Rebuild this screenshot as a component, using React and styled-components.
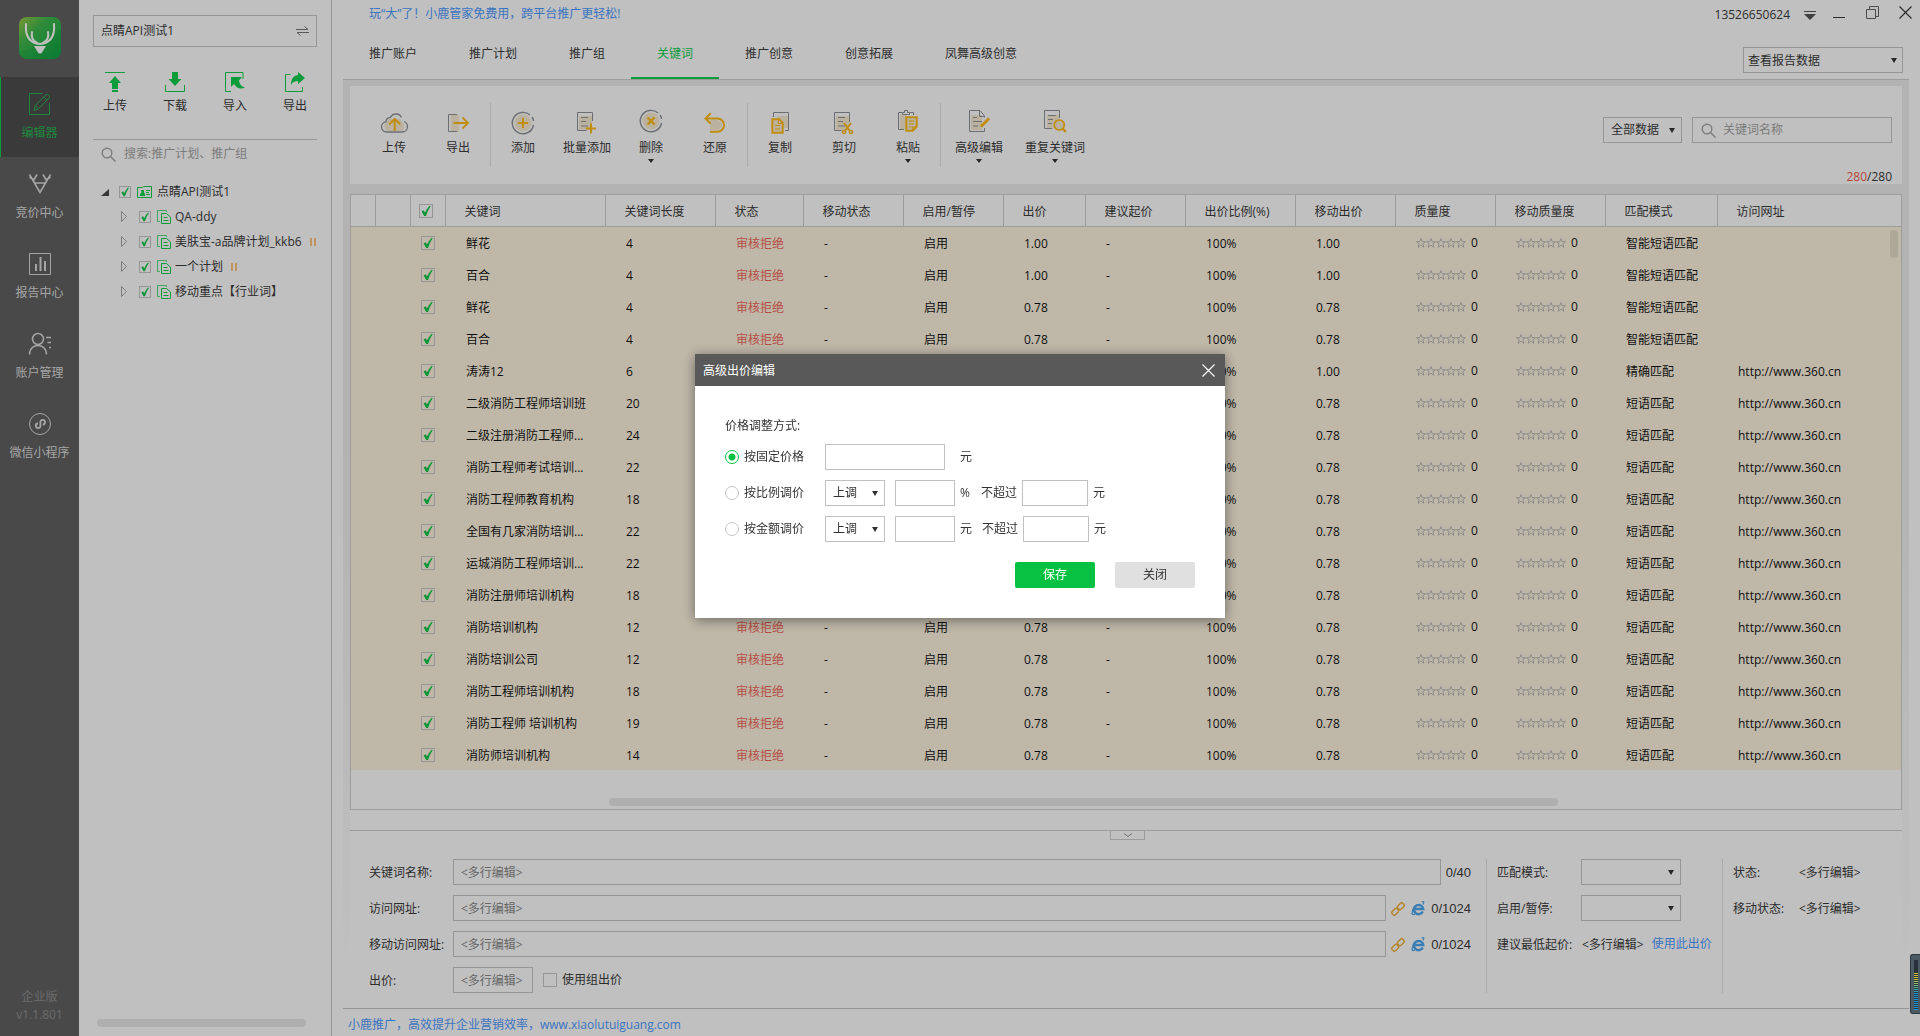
import React, { useState } from 'react'
import styled, { createGlobalStyle, css } from 'styled-components'

const TICK = "url(\"data:image/svg+xml,%3Csvg xmlns='http://www.w3.org/2000/svg' viewBox='0 0 12 12'%3E%3Cpath d='M1.600 6.400 L3.600 5.200 L5 7.600 Q6.800 3.600 9.400 1 L10.800 1 Q7.800 5.400 6 11 L4.200 11 Z' fill='%230bc94a'/%3E%3C/svg%3E\")"

const GlobalStyle = createGlobalStyle`
  * { box-sizing: border-box; }
  body {
    margin: 0;
    background: #fff;
    color: #3c3c3c;
    font: 12px/16px "Open Sans", "Noto Sans CJK SC", sans-serif;
  }
  button, input, select {
    font: inherit;
    color: inherit;
    margin: 0;
    border-radius: 0;
  }
  button {
    border: 0;
    padding: 0;
    background: none;
    cursor: pointer;
  }
  a { text-decoration: none; }
  ul { list-style: none; margin: 0; padding: 0; }
`;

const Page = styled.div`
  display: flex;
  min-height: 100vh;
`;

/* left rail */

const Rail = styled.nav`
  display: flex;
  flex-direction: column;
  flex: none;
  width: 79px;
  background: #626262;
`;

const LogoBox = styled.div`
  display: flex;
  justify-content: center;
  height: 77px;
  padding-top: 17px;
`;

const RailItem = styled.button`
  display: flex;
  flex-direction: column;
  align-items: center;
  gap: 9px;
  width: 100%;
  height: 80px;
  padding-top: 15px;
  color: #dcdcdc;
  ${p => p.$active && css`
    background: #4d4d4d;
    color: #29b453;
    box-shadow: inset 1px 0 #10cf50;
  `}
`;

const Version = styled.div`
  margin-top: auto;
  padding-bottom: 12px;
  line-height: 18px;
  text-align: center;
  color: #8f8f8f;
`;

/* account tree */

const TreePanel = styled.aside`
  display: flex;
  flex-direction: column;
  flex: none;
  width: 253px;
  padding: 15px 14px 9px;
  border-right: 1px solid #c7c7c7;
`;

const AccountBox = styled.button`
  display: flex;
  align-items: center;
  justify-content: space-between;
  height: 32px;
  padding: 0 7px;
  border: 1px solid #c7c7c7;
`;

const SyncButtons = styled.div`
  display: flex;
  margin: 25px -8px;
`;

const SyncButton = styled.button`
  display: flex;
  flex: 1;
  flex-direction: column;
  align-items: center;
  gap: 6px;
`;

const TreeSearch = styled.label`
  display: flex;
  align-items: center;
  gap: 8px;
  height: 29px;
  padding-left: 8px;
  border-top: 1px solid #c7c7c7;
`;

const BareInput = styled.input`
  flex: 1;
  min-width: 0;
  border: 0;
  padding: 0;
  background: none;
  outline: 0;
  &::placeholder { color: #a6a6a6; opacity: 1; }
`;

const Tree = styled.ul`
  margin-top: 11px;
  overflow: hidden;
`;

const TreeRow = styled.li`
  display: flex;
  align-items: center;
  height: 25px;
  padding-left: ${p => (p.$root ? 8 : 28)}px;
  white-space: nowrap;
  svg { flex: none; }
  label { margin-left: ${p => (p.$root ? 5 : 4)}px; }
`;

const TreeArrow = styled.button`
  display: flex;
  flex: none;
  width: 18px;
`;

const Pause = styled.i`
  flex: none;
  width: 6px;
  height: 8px;
  margin-left: 8px;
  border: solid #ffc67c;
  border-width: 0 2px;
`;

const ScrollThumb = styled.div`
  height: 8px;
  border-radius: 4px;
  background: #e9e9e9;
`;

const TreeScroll = styled(ScrollThumb)`
  width: 209px;
  margin: auto 0 0 4px;
`;

const Check = styled.input.attrs({ type: 'checkbox' })`
  appearance: none;
  flex: none;
  width: ${p => p.$size || 14}px;
  height: ${p => p.$size || 14}px;
  border: 1px solid #c7c7c7;
  vertical-align: middle;
  &:checked { background: ${TICK} center / ${p => (p.$size ? 10 : 12)}px no-repeat; }
`;

/* main area */

const Main = styled.main`
  display: flex;
  flex-direction: column;
  flex: 1;
  min-width: 0;
  padding: 0 11px 0 10px;
`;

const TitleBar = styled.header`
  display: flex;
  align-items: center;
  justify-content: space-between;
  height: 28px;
  padding-left: 27px;
`;

const Link = styled.a`
  color: #4f9bff;
`;

const WindowTools = styled.div`
  display: flex;
  align-items: center;
  gap: 14px;
  margin-right: -3px;
  padding-top: 2px;
  button { display: flex; }
`;

const WindowButtons = styled.div`
  display: flex;
  gap: 20px;
  margin-left: 3px;
  padding-bottom: 6px;
`;

const TabBar = styled.div`
  display: flex;
  align-items: flex-end;
  justify-content: space-between;
  height: 52px;
  margin-left: 1px;
  padding-right: 6px;
  border-bottom: 1px solid #cfcfcf;
`;

const Tabs = styled.div`
  display: flex;
`;

const Tab = styled.button`
  height: 51px;
  padding: 2px 26px 0;
  border-bottom: 2px solid transparent;
  ${p => p.$active && css`
    color: #10cf50;
    border-color: #10cf50;
  `}
`;

const SelectBox = styled.span`
  position: relative;
  display: inline-flex;
  width: ${p => p.$width}px;
  select {
    appearance: none;
    width: 100%;
    height: 26px;
    padding: 0 7px;
    border: 1px solid ${p => p.$line || '#c7c7c7'};
    background: transparent;
  }
  &::after {
    content: "";
    position: absolute;
    right: 7px;
    top: 11px;
    border: 3px solid transparent;
    border-top: 5px solid #333;
    border-bottom: 0;
    pointer-events: none;
  }
`;

const ReportSelect = styled(SelectBox)`
  margin-bottom: 6px;
  select { padding: 2px 4px 0; }
  &::after { right: 6px; }
`;

const Frame = styled.div`
  display: flex;
  flex: 1;
  flex-direction: column;
  margin-left: 1px;
  padding: 6px 7px 0;
  background: linear-gradient(#eee, #eee 40%, #fff 96%);
`;

const Toolbar = styled.section`
  padding: 17px 10px 0 12px;
  background: #fff;
`;

const ToolbarRow = styled.div`
  display: flex;
  height: 64px;
`;

const ToolGroup = styled.div`
  display: flex;
  & + & { border-left: 1px solid #e4e4e4; }
`;

const ToolButton = styled.button`
  display: flex;
  flex-direction: column;
  align-items: center;
  width: ${p => (p.$wide ? 76 : 64)}px;
  padding-top: 8px;
  svg { margin-bottom: 5px; }
  &::after {
    content: "";
    margin-top: 3px;
    border: 3px solid transparent;
    border-top: 4px solid ${p => (p.$menu ? '#333' : 'transparent')};
    border-bottom: 0;
  }
`;

const Filters = styled.div`
  display: flex;
  gap: 10px;
  height: 26px;
  margin: 14px 0 0 auto;
`;

const SearchBox = styled.label`
  display: flex;
  align-items: center;
  gap: 7px;
  width: 200px;
  padding: 0 8px;
  border: 1px solid #c7c7c7;
`;

const Count = styled.div`
  padding-top: 2px;
  line-height: 15px;
  text-align: right;
  b { font-weight: normal; color: #f2604f; }
`;

const Grid = styled.section`
  position: relative;
  display: flex;
  flex: 1;
  flex-direction: column;
  margin-top: 10px;
  border: 1px solid #d2d2d2;
  background: #fff;
`;

const Table = styled.table`
  width: 100%;
  table-layout: fixed;
  border-collapse: collapse;
  th, td {
    padding: 3px 0 0 21px;
    text-align: left;
    font-weight: normal;
    white-space: nowrap;
    overflow: hidden;
  }
  th {
    height: 31px;
    padding-left: 19px;
    border-right: 1px solid #cfcfcf;
    border-bottom: 1px solid #cfcfcf;
  }
  th:last-child { border-right: 0; }
  td {
    height: 32px;
    color: #151515;
    background: #fef4e0;
  }
  th:nth-child(3) { padding: 0 0 0 8px; }
  td:nth-child(3) { padding: 0 0 0 11px; }
`;

const Rejected = styled.span`
  color: #f2685c;
`;

const Stars = styled.span`
  display: flex;
  align-items: center;
  gap: 5px;
  padding-bottom: 2px;
`;

const RowScroll = styled.div`
  position: absolute;
  right: 3px;
  top: 35px;
  width: 8px;
  height: 28px;
  border-radius: 4px;
  background: #e6deca;
`;

const GridScroll = styled(ScrollThumb)`
  margin: auto 343px 3px 258px;
`;

/* batch edit form */

const Editor = styled.section`
  background: #fff;
  padding-top: 20px;
`;

const EditorInner = styled.div`
  position: relative;
  display: flex;
  padding: 28px 0 15px;
  border-top: 1px solid #cfcfcf;
`;

const Collapse = styled.button`
  position: absolute;
  left: 49%;
  top: -1px;
  display: flex;
  justify-content: center;
  width: 35px;
  height: 10px;
  border: 1px solid #cfcfcf;
  background: #fff;
`;

const Fields = styled.div`
  display: flex;
  flex-direction: column;
  gap: 10px;
  min-width: 0;
  ${p => (p.$width ? css`
    width: ${p.$width}px;
    padding-left: 10px;
    border-left: 1px solid #e4e4e4;
  ` : css`
    flex: 1;
    padding: 0 15px 0 19px;
  `)}
`;

const Field = styled.div`
  display: flex;
  align-items: center;
  height: 26px;
  white-space: nowrap;
`;

const FieldLabel = styled.label`
  flex: none;
  width: ${p => p.$width}px;
  padding-top: 2px;
`;

const FieldText = styled.span`
  flex: none;
  padding-top: 2px;
  margin-right: 8px;
`;

const TextInput = styled.input`
  height: 26px;
  min-width: 0;
  padding: 0 7px;
  border: 1px solid ${p => p.$line || '#c7c7c7'};
  background: #fff;
  ${p => (p.$width ? `width: ${p.$width}px;` : 'flex: 1;')}
  &::placeholder { color: #8a8a8a; opacity: 1; }
`;

const Tail = styled.span`
  display: flex;
  align-items: center;
  gap: 6px;
  margin-left: 5px;
  padding-top: 1px;
  font: 13px/16px "Liberation Sans", sans-serif;
  button { display: flex; }
`;

const GroupBid = styled.label`
  display: flex;
  align-items: center;
  gap: 5px;
  margin-left: 10px;
`;

const Footer = styled.footer`
  height: 28px;
  margin-left: 1px;
  padding: 8px 5px 0;
  border-top: 1px solid #c7c7c7;
`;

/* dialog */

const Shade = styled.div`
  position: fixed;
  inset: 0;
  display: flex;
  align-items: center;
  justify-content: center;
  padding-bottom: 64px;
  background: rgba(0, 0, 0, .247);
`;

const Dialog = styled.div`
  width: 530px;
  background: #fff;
  color: #333;
  box-shadow: 0 2px 12px rgba(0, 0, 0, .45);
`;

const DialogHead = styled.div`
  display: flex;
  align-items: center;
  justify-content: space-between;
  height: 32px;
  padding: 2px 10px 0 8px;
  background: #595959;
  color: #fff;
  button { display: flex; padding-bottom: 2px; }
`;

const DialogForm = styled.form`
  padding: 32px 30px 30px;
`;

const DialogRow = styled.div`
  display: flex;
  align-items: center;
  height: 26px;
  margin-top: 10px;
`;

const RadioLabel = styled.label`
  display: flex;
  align-items: center;
  gap: 5px;
  width: 100px;
`;

const Radio = styled.input.attrs({ type: 'radio' })`
  appearance: none;
  width: 14px;
  height: 14px;
  border: 1px solid #c4c4c4;
  border-radius: 50%;
  &:checked {
    border-color: #07c242;
    background: radial-gradient(#07c242 3px, transparent 4px);
  }
`;

const AmountInput = styled(TextInput)`
  margin-left: 10px;
`;

const Unit = styled.span`
  min-width: 11px;
  margin-left: ${p => p.$gap || 5}px;
`;

const Limit = styled.label`
  display: flex;
  align-items: center;
  gap: 5px;
  margin-left: 10px;
`;

const Actions = styled.div`
  display: flex;
  justify-content: flex-end;
  gap: 20px;
  margin-top: 20px;
`;

const ActionButton = styled.button`
  width: 80px;
  height: 26px;
  border-radius: 2px;
  background: ${p => (p.$primary ? '#07c242' : '#e0e0e0')};
  color: ${p => (p.$primary ? '#fff' : '#333')};
`;

const SpeedMeter = styled.div`
  position: fixed;
  right: 0;
  bottom: 22px;
  width: 10px;
  height: 60px;
  padding: 5px 2px 4px 3px;
  border: 1px solid #2f3940;
  border-right: 0;
  border-radius: 3px 0 0 3px;
  background: #4c5a64;
  &::after {
    content: "";
    display: block;
    width: 4px;
    height: 50px;
    background:
      repeating-linear-gradient(#28323a 0 1px, transparent 1px 2px),
      linear-gradient(#28323a 12px, #d8b92c 12px, #c8c83c 20px, #49b7a0 28px, #1d9be0 34px);
  }
`;

const GRAY = '#8f9399'
const GOLD = '#ffbc14'
const TINT = '#f8ecd2'

const Svg = ({ w = 24, h = 24, children, ...rest }) => (
  <svg width={w} height={h} viewBox={`0 0 ${w} ${h}`} fill="none" stroke="currentColor" overflow="visible" aria-hidden="true" {...rest}>
    {children}
  </svg>
)

const ToolIcon = ({ children }) => <Svg w={28} stroke={GRAY}>{children}</Svg>

const Lines = () => <path d="M8 6.500h7M8 10.500h5M8 15h7" />

const toolIcons = {
  upload: (
    <ToolIcon>
      <path d="M8 8h12l4 6-1 6H7l-3-4z" fill={TINT} stroke="none" />
      <path d="M24 10.500c2.300.9 3.500 2.700 3.500 5 0 3.500-2.500 5.500-5.500 5.500H7c-3.500 0-5.500-2.300-5.500-5s2-4.900 4.500-5.200C6 8 8 6.400 10.200 6.700 11.500 4.200 13.500 3 16 3c2.700 0 4.600 1.300 5.500 3.500" strokeWidth="1.300" />
      <path d="M14.700 20V8M9.300 13.300l5.400-5.400 5.400 5.400" stroke={GOLD} strokeWidth="2" />
    </ToolIcon>
  ),
  exportOut: (
    <ToolIcon>
      <path d="M7 4h8v17H7z" fill={TINT} stroke="none" />
      <path d="M13 3.500H4.500v17H13" />
      <path d="M9.500 12h14M18.500 6.500l5.500 5.500-5.500 5.500" stroke={GOLD} strokeWidth="1.800" />
    </ToolIcon>
  ),
  add: (
    <ToolIcon>
      <circle cx="14" cy="12" r="8.500" fill={TINT} stroke="none" />
      <path d="M24.500 14A10.700 10.700 0 1 1 21 4M23 6a10 10 0 0 1 1.600 4" strokeWidth="1.400" />
      <path d="M14 7v10M9 12h10" stroke={GOLD} strokeWidth="2" />
    </ToolIcon>
  ),
  batch: (
    <ToolIcon>
      <path d="M6 5h13v14H6z" fill={TINT} stroke="none" />
      <path d="M19.500 10V1.500h-15v18h9" />
      <Lines />
      <path d="M18 12.500v10M13 17.500h10" stroke={GOLD} strokeWidth="2" />
    </ToolIcon>
  ),
  remove: (
    <ToolIcon>
      <circle cx="14" cy="10" r="8.500" fill={TINT} stroke="none" />
      <path d="M24.500 12A10.700 10.700 0 1 1 21 2M23 4a10 10 0 0 1 1.600 4" strokeWidth="1.400" />
      <path d="M10.500 6.500l7 7M17.500 6.500l-7 7" stroke={GOLD} strokeWidth="2.400" />
    </ToolIcon>
  ),
  restore: (
    <ToolIcon>
      <path d="M9 9h8l4 3v4l-4 3H9z" fill={TINT} stroke="none" />
      <path d="M9.700 2.300L4.500 7.500l5.200 5.200M5 7.500h11.500a6.400 6.400 0 0 1 0 13.200H9" stroke={GOLD} strokeWidth="2" />
    </ToolIcon>
  ),
  copy: (
    <ToolIcon>
      <path d="M11 5h11v12H11z" fill={TINT} stroke="none" />
      <path d="M7.500 6V1.500h15v18H19" />
      <path d="M6.300 8.300h7l3.400 3.500v10H6.300z" fill={TINT} stroke={GOLD} strokeWidth="2" />
      <path d="M9 14.500h5M9 18h5M12.500 9v3.500h4" stroke={GOLD} />
    </ToolIcon>
  ),
  cut: (
    <ToolIcon>
      <path d="M6 5h13v14H6z" fill={TINT} stroke="none" />
      <path d="M19.500 11V1.500h-15v18h7" />
      <Lines />
      <path d="M14 12l6 8M21 12l-6 8" stroke={GOLD} strokeWidth="2" />
      <circle cx="14" cy="21" r="1.600" stroke={GOLD} strokeWidth="1.500" />
      <circle cx="21" cy="21" r="1.600" stroke={GOLD} strokeWidth="1.500" />
    </ToolIcon>
  ),
  paste: (
    <ToolIcon>
      <path d="M6 4h6v14H6z" fill={TINT} stroke="none" />
      <path d="M8 1.500H4.500v17H10M16 1.500h3.500V4M8.500 1.500v2h7v-2h-2v-2h-3v2z" />
      <path d="M12.300 6.300h10.400v9.400l-4 4h-6.400z" fill={TINT} stroke={GOLD} strokeWidth="2" />
      <path d="M15 10h5M15 13h5M15 16h2.500M18.500 20v-4H22" stroke={GOLD} />
    </ToolIcon>
  ),
  edit: (
    <ToolIcon>
      <path d="M6 4h11v15H6z" fill={TINT} stroke="none" />
      <path d="M19.500 6.500V5L15-.500H4.500v21h15V17M14.500 0v5.500h5M8 6.500h4M8 10.500h9M8 15h5" />
      <path d="M16 15.500l8-8" stroke={GOLD} strokeWidth="3" />
    </ToolIcon>
  ),
  dup: (
    <ToolIcon>
      <path d="M6 4h12v14H6z" fill={TINT} stroke="none" />
      <path d="M18.500 7V-.500h-15v18H11M7 4.500h8M7 8.500h5M7 12.500h4" />
      <circle cx="18.300" cy="14" r="5" fill={TINT} stroke={GOLD} strokeWidth="1.700" />
      <path d="M21.800 17.700l3 3.200" stroke={GOLD} strokeWidth="2.400" />
    </ToolIcon>
  )
}

const railIcons = {
  editor: (
    <Svg>
      <path d="M14.500 1.500H1.500v21h20V11" />
      <path d="M6 18.500l1.300-5L18 2.700c1.500-1.200 4.500 1.500 3.200 3.200L10.500 16.800zM7.300 13.500l3.200 3.300M16 5l3 3" />
    </Svg>
  ),
  bid: (
    <Svg strokeWidth="1.600">
      <path d="M1.500 2.500l10.500 18 10.500-18M6.500 11h11M9 2.500l-3.500 6M15 2.500l3.500 6M1.500 5l4.500 3M22.500 5L18 8" />
    </Svg>
  ),
  report: (
    <Svg>
      <path d="M1.500 1.500h21v21h-21z" />
      <path d="M8 19v-7M12.500 19V5M17 19V9" strokeWidth="2" />
    </Svg>
  ),
  account: (
    <Svg strokeWidth="1.500">
      <circle cx="10" cy="7" r="5.500" />
      <path d="M1.500 22.500c0-12 17-12 17 0M18 5.500h5M19.500 10.500H23M21 15.500h2" />
    </Svg>
  ),
  mini: (
    <Svg>
      <circle cx="12" cy="12" r="10.500" />
      <path d="M10 11.500a2.300 2.300 0 1 0 2.400 2.500V10a2.300 2.300 0 1 1 2.400 2.500" strokeWidth="1.800" />
    </Svg>
  )
}

const GREEN = '#10cf50'

const syncIcons = {
  up: <><path d="M0 .500h20" /><path d="M10 4l6 7h-3v6H7v-6H4zM7 18h6v2H7z" fill={GREEN} stroke="none" /></>,
  down: <><path d="M.500 13v6.500h19V13" /><path d="M7 0h6v7h3.500L10 14 3.500 7H7z" fill={GREEN} stroke="none" /></>,
  into: <><path d="M18 7V.500H.500v19H6" /><path d="M6 5h11l-3 3.500c.5 4 2.500 6 6 7-5 2.500-9 0-11-3.500L6 15z" fill={GREEN} stroke="none" /></>,
  out: <><path d="M5.500 2.500H.500v17h17V15" /><path d="M13 0l7 6-7 6V9C9.500 9 7.500 10 6 13c0-6 2.500-9.500 7-10z" fill={GREEN} stroke="none" /></>
}

const Logo = () => (
  <Svg w={42} h={42}>
    <defs>
      <linearGradient id="leaf" x1="0" y1="0" x2="1" y2="1">
        <stop offset="0" stopColor="#9fca45" />
        <stop offset=".35" stopColor="#3fb94d" />
        <stop offset="1" stopColor="#0da845" />
      </linearGradient>
    </defs>
    <rect width="42" height="42" rx="8" fill="url(#leaf)" stroke="none" />
    <path d="M0 34c14-1 30-10 42-22v22a8 8 0 0 1-8 8H8a8 8 0 0 1-8-8z" fill="#0b9c40" opacity=".25" stroke="none" />
    <g stroke="#fff" strokeWidth="2" strokeLinecap="round">
      <path d="M7 7c-1 12 3 19 14 20 11-1 15-8 14-20" />
      <path d="M13 15c-1 5 1 9 5 11M29 15c1 5-1 9-5 11" />
    </g>
    <path d="M15 29h12l-4 6.500c-1 1.500-3 1.500-4 0z" fill="#fff" stroke="none" />
  </Svg>
)

const SearchIcon = () => (
  <Svg w={15} h={15} stroke="#a6a6a6" strokeWidth="1.400">
    <circle cx="6" cy="6" r="4.800" />
    <path d="M9.500 9.500l5 5" />
  </Svg>
)

const CloseIcon = ({ size = 13 }) => (
  <Svg w={size} h={size} strokeWidth="1.200"><path d={`M.500.500l${size - 1} ${size - 1}M${size - 0.5}.500l-${size - 1} ${size - 1}`} /></Svg>
)

const PlanIcon = () => (
  <Svg w={14} h={14} stroke={GREEN}>
    <path d="M3 11.500H.500v-11h9V2" opacity=".7" />
    <path d="M4.500 3.500h5l4 3.500v6.500h-9zM6.500 7.500h4M6.500 10.500h5" />
  </Svg>
)

const AccountIcon = () => (
  <Svg w={15} h={12} stroke={GREEN}>
    <path d="M.500 1.500h5l1-1h8v11H.500zM9 4.500h4M9 6.500h3M9 8.500h4" />
    <path d="M3 10V8l1.500-1.500L4 4h3v2.500L8 8v2z" fill={GREEN} stroke="none" />
  </Svg>
)

const FiveStars = () => (
  <Svg w={50} h={12} stroke="#b5b5b5" strokeWidth=".9">
    {[0, 10, 20, 30, 40].map(x => (
      <path key={x} transform={`translate(${x} 1)`} d="M5 .500l1.200 3.200h3.300L6.900 5.700l1 3.600L5 7.200 2.100 9.300l1-3.600L.500 3.700h3.300z" />
    ))}
  </Svg>
)

const LinkIcon = () => (
  <Svg w={14} h={14} stroke="#f0b13a" strokeWidth="1.500">
    <rect x="-3.500" y="-2.300" width="7" height="4.600" rx="1.500" transform="translate(4.200 9.800) rotate(-45)" />
    <rect x="-3.500" y="-2.300" width="7" height="4.600" rx="1.500" transform="translate(9.800 4.200) rotate(-45)" />
  </Svg>
)

const BrowserIcon = () => (
  <Svg w={14} h={15} stroke="#4fa8f0">
    <path d="M11.800 10.500A4.600 4.600 0 1 1 12.200 8H4.500" strokeWidth="2.500" />
    <path d="M12 3.500C13.500 1 13 0 10.500 1M3 6C.500 11 0 15 4 13" strokeWidth="1.300" />
  </Svg>
)

const railItems = [
  ['editor', '编辑器'],
  ['bid', '竞价中心'],
  ['report', '报告中心'],
  ['account', '账户管理'],
  ['mini', '微信小程序']
]

const syncItems = [
  ['up', '上传'],
  ['down', '下载'],
  ['into', '导入'],
  ['out', '导出']
]

const plans = [
  { name: 'QA-ddy' },
  { name: '美肤宝-a品牌计划_kkb6', paused: true },
  { name: '一个计划', paused: true },
  { name: '移动重点【行业词】' }
]

const tabs = ['推广账户', '推广计划', '推广组', '关键词', '推广创意', '创意拓展', '凤舞高级创意']

const tools = [
  [
    { icon: 'upload', text: '上传' },
    { icon: 'exportOut', text: '导出' }
  ],
  [
    { icon: 'add', text: '添加' },
    { icon: 'batch', text: '批量添加' },
    { icon: 'remove', text: '删除', menu: true },
    { icon: 'restore', text: '还原' }
  ],
  [
    { icon: 'copy', text: '复制' },
    { icon: 'cut', text: '剪切' },
    { icon: 'paste', text: '粘贴', menu: true }
  ],
  [
    { icon: 'edit', text: '高级编辑', menu: true, wide: true },
    { icon: 'dup', text: '重复关键词', menu: true, wide: true }
  ]
]

const columns = [
  ['', 24], ['', 35], ['check', 35], ['关键词', 160], ['关键词长度', 110], ['状态', 88],
  ['移动状态', 100], ['启用/暂停', 100], ['出价', 82], ['建议起价', 100], ['出价比例(%)', 110],
  ['移动出价', 100], ['质量度', 100], ['移动质量度', 110], ['匹配模式', 112], ['访问网址']
]

const SMART = '智能短语匹配'
const PHRASE = '短语匹配'
const SITE = 'http://www.360.cn'

const keywords = [
  ['鲜花', 4, '1.00', SMART, ''],
  ['百合', 4, '1.00', SMART, ''],
  ['鲜花', 4, '0.78', SMART, ''],
  ['百合', 4, '0.78', SMART, ''],
  ['涛涛12', 6, '1.00', '精确匹配', SITE],
  ['二级消防工程师培训班', 20, '0.78', PHRASE, SITE],
  ['二级注册消防工程师...', 24, '0.78', PHRASE, SITE],
  ['消防工程师考试培训...', 22, '0.78', PHRASE, SITE],
  ['消防工程师教育机构', 18, '0.78', PHRASE, SITE],
  ['全国有几家消防培训...', 22, '0.78', PHRASE, SITE],
  ['运城消防工程师培训...', 22, '0.78', PHRASE, SITE],
  ['消防注册师培训机构', 18, '0.78', PHRASE, SITE],
  ['消防培训机构', 12, '0.78', PHRASE, SITE],
  ['消防培训公司', 12, '0.78', PHRASE, SITE],
  ['消防工程师培训机构', 18, '0.78', PHRASE, SITE],
  ['消防工程师 培训机构', 19, '0.78', PHRASE, SITE],
  ['消防师培训机构', 14, '0.78', PHRASE, SITE]
]

function Select ({ id, label, options = [''], as: Box = SelectBox, ...rest }) {
  return (
    <Box {...rest}>
      <select id={id} aria-label={label}>
        {options.map(o => <option key={o}>{o}</option>)}
      </select>
    </Box>
  )
}

function Sidebar () {
  return (
    <Rail>
      <LogoBox><Logo /></LogoBox>
      {railItems.map(([icon, text], i) => (
        <RailItem key={icon} $active={i === 0}>
          {railIcons[icon]}
          {text}
        </RailItem>
      ))}
      <Version>企业版<br />v1.1.801</Version>
    </Rail>
  )
}

function AccountTree () {
  return (
    <TreePanel>
      <AccountBox>
        点睛API测试1
        <Svg w={13} h={10} stroke="#777"><path d="M0 3.500h12M8.500.500l3.500 3M13 6.500H1M4.500 9.500L1 6.500" /></Svg>
      </AccountBox>
      <SyncButtons>
        {syncItems.map(([icon, text]) => (
          <SyncButton key={icon}>
            <Svg w={20} h={20} stroke={GREEN}>{syncIcons[icon]}</Svg>
            {text}
          </SyncButton>
        ))}
      </SyncButtons>
      <TreeSearch>
        <SearchIcon />
        <BareInput placeholder="搜索:推广计划、推广组" aria-label="搜索" />
      </TreeSearch>
      <Tree>
        <TreeRow $root>
          <TreeArrow aria-label="收起"><Svg w={8} h={8} fill="#4a4a4a" stroke="none"><path d="M8 1v7H0z" /></Svg></TreeArrow>
          <Check id="root-account" $size={12} defaultChecked />
          <Svg w={6} h={12} />
          <AccountIcon />
          <label htmlFor="root-account">点睛API测试1</label>
        </TreeRow>
        {plans.map((plan, i) => (
          <TreeRow key={plan.name}>
            <TreeArrow aria-label="展开"><Svg w={6} h={11} stroke="#a8a8a8"><path d="M.500.500v10l5-5z" /></Svg></TreeArrow>
            <Check id={`plan-${i}`} $size={12} defaultChecked />
            <Svg w={6} h={12} />
            <PlanIcon />
            <label htmlFor={`plan-${i}`}>{plan.name}</label>
            {plan.paused && <Pause />}
          </TreeRow>
        ))}
      </Tree>
      <TreeScroll />
    </TreePanel>
  )
}

function KeywordTable () {
  return (
    <Grid>
      <Table>
        <colgroup>
          {columns.map(([, width], i) => <col key={i} width={width} />)}
        </colgroup>
        <thead>
          <tr>
            {columns.map(([title], i) => (
              <th key={i}>{title === 'check' ? <Check aria-label="全选" defaultChecked /> : title}</th>
            ))}
          </tr>
        </thead>
        <tbody>
          {keywords.map(([word, length, bid, match, url], i) => (
            <tr key={i}>
              <td />
              <td />
              <td><Check aria-label={word} defaultChecked /></td>
              <td>{word}</td>
              <td>{length}</td>
              <td><Rejected>审核拒绝</Rejected></td>
              <td>-</td>
              <td>启用</td>
              <td>{bid}</td>
              <td>-</td>
              <td>100%</td>
              <td>{bid}</td>
              <td><Stars><FiveStars />0</Stars></td>
              <td><Stars><FiveStars />0</Stars></td>
              <td>{match}</td>
              <td>{url}</td>
            </tr>
          ))}
        </tbody>
      </Table>
      <RowScroll />
      <GridScroll />
    </Grid>
  )
}

function UrlField ({ id, label }) {
  return (
    <Field>
      <FieldLabel $width={84} htmlFor={id}>{label}</FieldLabel>
      <TextInput id={id} placeholder="<多行编辑>" />
      <Tail>
        <button aria-label="插入链接"><LinkIcon /></button>
        <button aria-label="打开网址"><BrowserIcon /></button>
        0/1024
      </Tail>
    </Field>
  )
}

function BatchEditor () {
  return (
    <Editor>
      <EditorInner>
        <Collapse aria-label="收起">
          <Svg w={10} h={8} stroke="#999"><path d="M1 2.500l4 3 4-3" /></Svg>
        </Collapse>
        <Fields>
          <Field>
            <FieldLabel $width={84} htmlFor="word">关键词名称:</FieldLabel>
            <TextInput id="word" placeholder="<多行编辑>" />
            <Tail>0/40</Tail>
          </Field>
          <UrlField id="url" label="访问网址:" />
          <UrlField id="mobile-url" label="移动访问网址:" />
          <Field>
            <FieldLabel $width={84} htmlFor="bid">出价:</FieldLabel>
            <TextInput id="bid" $width={80} placeholder="<多行编辑>" />
            <GroupBid><Check />使用组出价</GroupBid>
          </Field>
        </Fields>
        <Fields $width={236}>
          <Field>
            <FieldLabel $width={84} htmlFor="match">匹配模式:</FieldLabel>
            <Select id="match" $width={100} />
          </Field>
          <Field>
            <FieldLabel $width={84} htmlFor="enabled">启用/暂停:</FieldLabel>
            <Select id="enabled" $width={100} />
          </Field>
          <Field>
            <FieldLabel as="span" $width={85}>建议最低起价:</FieldLabel>
            <FieldText>&lt;多行编辑&gt;</FieldText>
            <Link href="#">使用此出价</Link>
          </Field>
        </Fields>
        <Fields $width={180}>
          <Field>
            <FieldLabel as="span" $width={66}>状态:</FieldLabel>
            <FieldText>&lt;多行编辑&gt;</FieldText>
          </Field>
          <Field>
            <FieldLabel as="span" $width={66}>移动状态:</FieldLabel>
            <FieldText>&lt;多行编辑&gt;</FieldText>
          </Field>
        </Fields>
      </EditorInner>
    </Editor>
  )
}

const BOX = '#c0c0c0'

function AdjustRow ({ value, label, unit, mode, onMode }) {
  return (
    <DialogRow>
      <RadioLabel>
        <Radio name="mode" checked={mode === value} onChange={() => onMode(value)} />
        {label}
      </RadioLabel>
      <Select label="调整方向" options={['上调', '下调']} $width={60} $line={BOX} />
      <AmountInput $width={60} $line={BOX} aria-label={label} />
      <Unit>{unit}</Unit>
      <Limit>
        不超过
        <TextInput $width={66} $line={BOX} />
      </Limit>
      <Unit>元</Unit>
    </DialogRow>
  )
}

function BidDialog ({ onClose }) {
  const [mode, setMode] = useState('fixed')
  const handleSave = (e) => {
    e.preventDefault()
    onClose()
  }
  return (
    <Dialog role="dialog" aria-label="高级出价编辑">
      <DialogHead>
        高级出价编辑
        <button aria-label="关闭" onClick={onClose}><CloseIcon /></button>
      </DialogHead>
      <DialogForm onSubmit={handleSave}>
        价格调整方式:
        <DialogRow>
          <RadioLabel>
            <Radio name="mode" checked={mode === 'fixed'} onChange={() => setMode('fixed')} />
            按固定价格
          </RadioLabel>
          <TextInput $width={120} $line={BOX} aria-label="固定价格" />
          <Unit $gap={15}>元</Unit>
        </DialogRow>
        <AdjustRow value="ratio" label="按比例调价" unit="%" mode={mode} onMode={setMode} />
        <AdjustRow value="amount" label="按金额调价" unit="元" mode={mode} onMode={setMode} />
        <Actions>
          <ActionButton $primary type="submit">保存</ActionButton>
          <ActionButton type="button" onClick={onClose}>关闭</ActionButton>
        </Actions>
      </DialogForm>
    </Dialog>
  )
}

function App () {
  const [open, setOpen] = useState(true)
  const [tab, setTab] = useState('关键词')
  return (
    <Page>
      <GlobalStyle />
      <Sidebar />
      <AccountTree />
      <Main>
        <TitleBar>
          <Link href="#">玩“大”了！小鹿管家免费用，跨平台推广更轻松!</Link>
          <WindowTools>
            13526650624
            <button aria-label="菜单"><Svg w={12} h={9} fill="#555" stroke="none"><path d="M0 0h12v1H0zM0 3h12L6 9z" /></Svg></button>
            <WindowButtons>
              <button aria-label="最小化"><Svg w={13} h={13}><path d="M0 11.500h12" /></Svg></button>
              <button aria-label="还原"><Svg w={13} h={13} stroke="#666"><path d="M.500 3.500h9v9h-9zM3.500 3V.500h9v10H10" /></Svg></button>
              <button aria-label="关闭"><CloseIcon /></button>
            </WindowButtons>
          </WindowTools>
        </TitleBar>
        <TabBar>
          <Tabs>
            {tabs.map(t => (
              <Tab key={t} $active={t === tab} onClick={() => setTab(t)}>{t}</Tab>
            ))}
          </Tabs>
          <Select as={ReportSelect} label="报告" options={['查看报告数据']} $width={160} />
        </TabBar>
        <Frame>
          <Toolbar>
            <ToolbarRow>
              {tools.map((group, i) => (
                <ToolGroup key={i}>
                  {group.map(({ icon, text, menu, wide }) => (
                    <ToolButton key={icon} $menu={menu} $wide={wide} onClick={icon === 'edit' ? () => setOpen(true) : undefined}>
                      {toolIcons[icon]}
                      {text}
                    </ToolButton>
                  ))}
                </ToolGroup>
              ))}
              <Filters>
                <Select label="数据范围" options={['全部数据']} $width={79} />
                <SearchBox>
                  <SearchIcon />
                  <BareInput placeholder="关键词名称" aria-label="关键词名称" />
                </SearchBox>
              </Filters>
            </ToolbarRow>
            <Count><b>280</b>/280</Count>
          </Toolbar>
          <KeywordTable />
          <BatchEditor />
        </Frame>
        <Footer>
          <Link href="#">小鹿推广，高效提升企业营销效率，www.xiaolutuiguang.com</Link>
        </Footer>
      </Main>
      {open && (
        <Shade>
          <BidDialog onClose={() => setOpen(false)} />
        </Shade>
      )}
      <SpeedMeter />
    </Page>
  )
}

export default App
